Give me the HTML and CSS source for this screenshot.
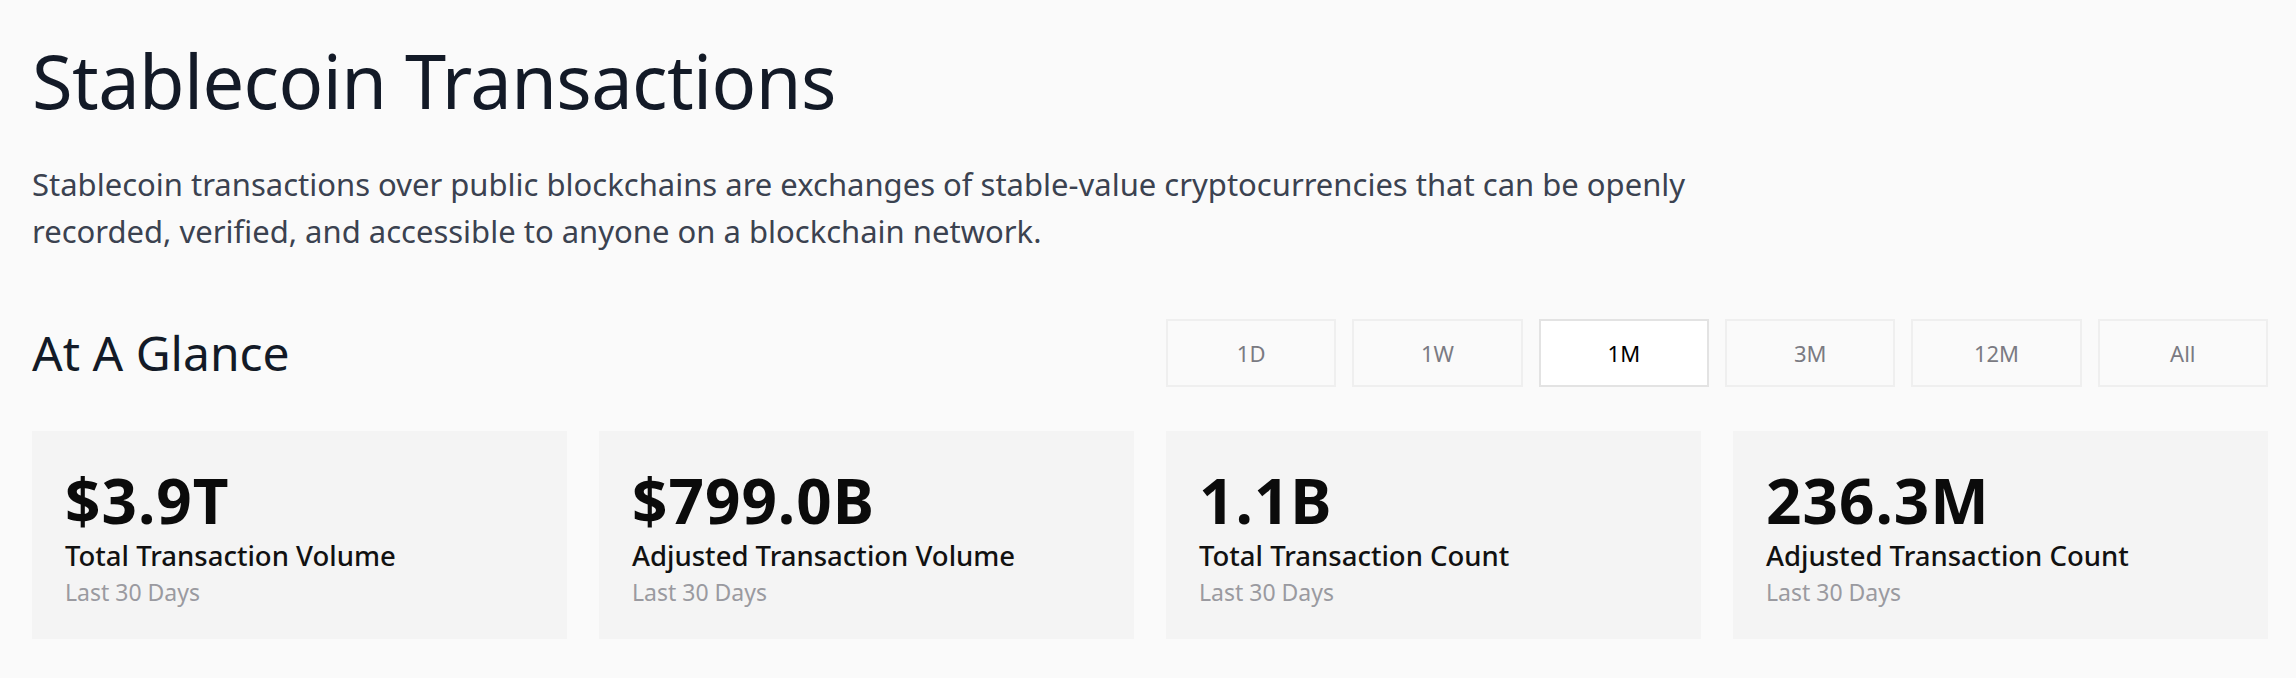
FILE: index.html
```html
<!DOCTYPE html>
<html lang="en">

<head>
  <meta charset="UTF-8">
  <meta name="viewport" content="width=device-width, initial-scale=1.0">
  <title>Stablecoin Transactions</title>
  <link rel="stylesheet" href="styles.css">
</head>

<body>
  <main class="page">
    <h1>Stablecoin Transactions</h1>
    <p class="intro">Stablecoin transactions over public blockchains are exchanges of stable-value cryptocurrencies that can be openly
      recorded, verified, and accessible to anyone on a blockchain network.</p>

    <div class="glance-head">
      <h2>At A Glance</h2>
      <div class="ranges">
        <button class="range">1D</button>
        <button class="range">1W</button>
        <button class="range active">1M</button>
        <button class="range">3M</button>
        <button class="range">12M</button>
        <button class="range">All</button>
      </div>
    </div>

    <div class="stats">
      <div class="stat-card">
        <div class="stat-value">$3.9T</div>
        <div class="stat-label">Total Transaction Volume</div>
        <div class="stat-period">Last 30 Days</div>
      </div>
      <div class="stat-card">
        <div class="stat-value">$799.0B</div>
        <div class="stat-label">Adjusted Transaction Volume</div>
        <div class="stat-period">Last 30 Days</div>
      </div>
      <div class="stat-card">
        <div class="stat-value">1.1B</div>
        <div class="stat-label">Total Transaction Count</div>
        <div class="stat-period">Last 30 Days</div>
      </div>
      <div class="stat-card">
        <div class="stat-value">236.3M</div>
        <div class="stat-label">Adjusted Transaction Count</div>
        <div class="stat-period">Last 30 Days</div>
      </div>
    </div>
  </main>
</body>

</html>
```

FILE: styles.css
```css
body {
  font-family: 'Noto Sans', Arial, sans-serif;
  margin: 0;
  padding: 0;
  background-color: #fafafa;
}

.page {
  padding: 44px 28px 38px 32px;
}

h1,
h2 {
  margin: 0;
  font-weight: 400;
  color: #131a27;
  line-height: 1;
}

h1 {
  font-size: 74px;
  letter-spacing: -0.6px;
}

.intro {
  margin: 43px 0 0;
  max-width: 1730px;
  font-size: 31px;
  line-height: 47px;
  color: #3b4250;
}

.glance-head {
  display: grid;
  grid-template-columns: 1fr 1fr;
  column-gap: 32px;
  align-items: center;
  margin-top: 64px;
}

h2 {
  font-size: 48px;
}

.ranges {
  display: grid;
  grid-template-columns: repeat(6, 1fr);
  gap: 16px;
}

.range {
  height: 68px;
  font-family: inherit;
  font-size: 22px;
  color: #7a7a82;
  background-color: transparent;
  border: 2px solid #efefef;
  cursor: pointer;
}

.range.active {
  color: #000;
  background-color: #fff;
  border-color: #e3e3e3;
}

.stats {
  display: grid;
  grid-template-columns: repeat(4, 1fr);
  gap: 32px;
  margin-top: 44px;
}

.stat-card {
  height: 208px;
  box-sizing: border-box;
  padding: 38px 33px 0;
  background-color: #f4f4f4;
}

.stat-value {
  font-size: 62px;
  font-weight: 700;
  letter-spacing: 1px;
  line-height: 1;
  color: #0b0b0b;
}

.stat-label {
  margin-top: 11px;
  font-size: 27.5px;
  font-weight: 500;
  line-height: 1;
  color: #111;
}

.stat-period {
  margin-top: 11px;
  font-size: 23px;
  line-height: 1;
  color: #9a9aa0;
}
```
